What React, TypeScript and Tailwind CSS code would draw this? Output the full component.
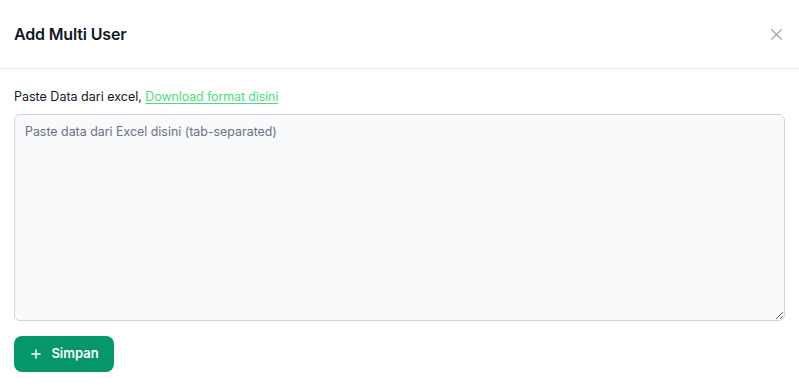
import { X, Plus } from 'lucide-react'

export default function App() {
  return (
    <div className="w-[799px] h-[390px] bg-white font-['Inter',sans-serif] text-[#111827] overflow-hidden">
      <div className="h-[69px] flex items-center justify-between px-[14px] border-b border-[#e5e7eb]">
        <h2 className="text-[16px] font-semibold tracking-[-0.01em]">Add Multi User</h2>
        <button className="text-[#9ca3af] -mr-[1px]">
          <X size={19} strokeWidth={1.5} />
        </button>
      </div>
      <div className="px-[14px] pt-[19px]">
        <p className="text-[12.5px] leading-[18px] text-[#111827]">
          Paste Data dari excel,{' '}
          <a href="#" className="text-[#4ade80] underline underline-offset-2 tracking-[-0.01em]">Download format disini</a>
        </p>
        <textarea
          className="mt-[8px] block w-full h-[207px] rounded-md border border-[#d1d5db] bg-[#f9fafb] px-[10px] py-[8px] text-[12.4px] leading-[18px] placeholder:text-[#6b7280] outline-none"
          placeholder="Paste data dari Excel disini (tab-separated)"
        />
        <button className="mt-[15px] h-[36px] w-[100px] rounded-lg bg-[#059669] text-white text-[13px] font-semibold flex items-center justify-center gap-[8px]">
          <Plus size={14} strokeWidth={2.5} />
          Simpan
        </button>
      </div>
    </div>
  )
}
